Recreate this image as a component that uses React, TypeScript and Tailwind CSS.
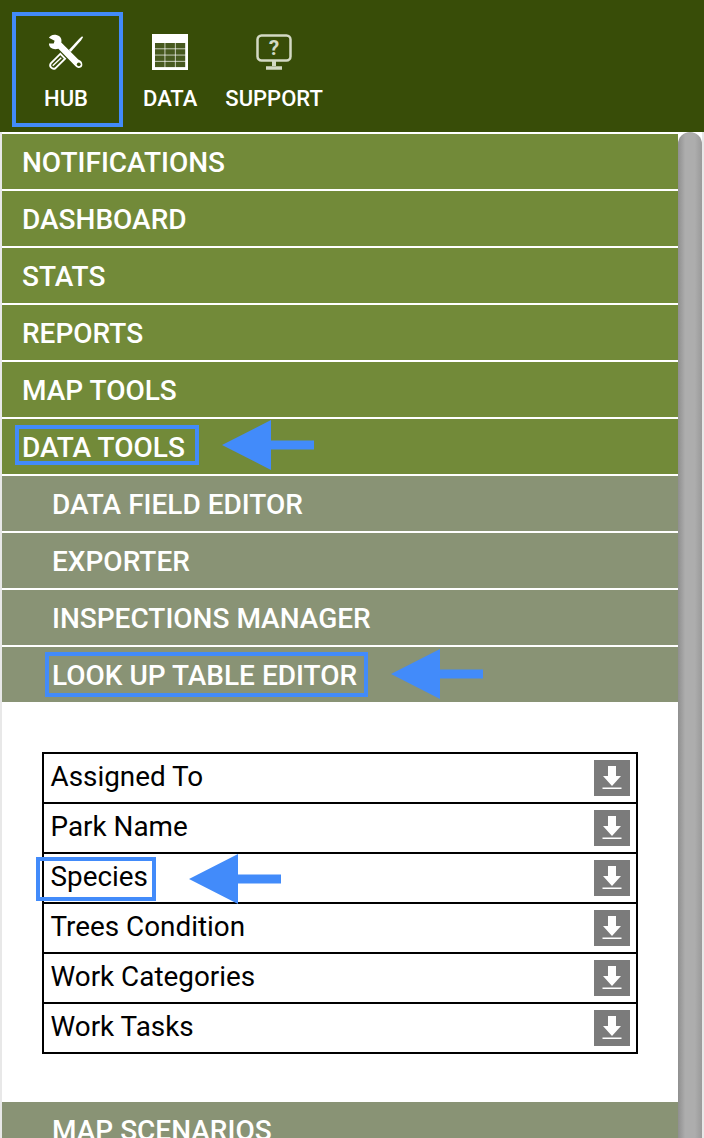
import { ReactNode } from "react";

// Blue annotation arrow pointing left
function Arrow({ className }: { className: string }) {
  return (
    <svg className={`absolute ${className}`} width="92" height="50" viewBox="0 0 92 50">
      <path d="M0 25 L49 0 V20.5 H92 V29.5 H49 V50 Z" fill="#428BFA" />
    </svg>
  );
}

function ToolsIcon() {
  return (
    <svg width="36" height="36" viewBox="0 0 38 38" fill="none">
      <path d="M22 17 L33 5 L36 2.5 L37 3.5 L35 6.5 L24 19 Z" fill="white" />
      <path d="M13 21 L3 31 A3.6 3.6 0 0 0 8 36 L18 26 Z" stroke="white" strokeWidth="2" fill="none" />
      <path d="M5 33.5 L14 25" stroke="white" strokeWidth="1.5" />
      <path
        d="M9 1 C5 0 2 2 1 4 L7 7 L6 10 L1 10 C1 15 6 17 11 15.5 L29 34 C32 37.5 37.5 36 36 31 C36 29 34 28 32 27 L14 9 C15 5 13 2 9 1 Z"
        fill="white"
      />
      <circle cx="32.5" cy="32" r="2" fill="#384D08" />
    </svg>
  );
}

function TableIcon() {
  const cols = [0, 1, 2];
  const rows = [0, 1, 2, 3];
  return (
    <svg width="36" height="36" viewBox="0 0 36 36">
      <rect width="36" height="36" fill="white" />
      {rows.map((r) =>
        cols.map((c) => (
          <rect key={`${r}-${c}`} x={3 + c * 10.3} y={9 + r * 6.2} width="9.6" height="5.5" fill="#47591f" />
        ))
      )}
    </svg>
  );
}

function SupportIcon() {
  return (
    <svg width="36" height="36" viewBox="0 0 36 36" fill="none">
      <rect x="1.5" y="1.5" width="33" height="25" rx="4" stroke="#d3d9c4" strokeWidth="2.5" />
      <path d="M18 27 V32" stroke="#d3d9c4" strokeWidth="4" />
      <path d="M10 34 H26" stroke="#d3d9c4" strokeWidth="3.5" />
      <text x="18" y="21" textAnchor="middle" fontSize="21" fontWeight="700" fill="#d3d9c4" fontFamily="Roboto, sans-serif">
        ?
      </text>
    </svg>
  );
}

function DownloadIcon() {
  return (
    <div className="flex h-9 w-9 items-center justify-center bg-[#7b7b7b]">
      <svg width="20" height="24" viewBox="0 0 20 24">
        <path d="M6 0 H14 V10 H19 L10 20 L1 10 H6 Z" fill="white" />
        <rect x="0.5" y="21.5" width="19" height="1.5" fill="white" />
      </svg>
    </div>
  );
}

function Tab({ icon, label }: { icon: ReactNode; label: string }) {
  return (
    <div className="flex flex-col items-center">
      <div className="flex h-9 items-center">{icon}</div>
      <span className="mt-[17px] text-[22px] leading-[24px] font-medium text-white">{label}</span>
    </div>
  );
}

function MenuRow({ label, sub, children }: { label: string; sub?: boolean; children?: ReactNode }) {
  return (
    <div
      className={`relative mb-[2px] flex h-[55px] items-center pt-[2px] text-[28px] leading-[53px] font-medium text-white ${
        sub ? "bg-[#899375] pl-[50px]" : "bg-[#728a39] pl-[20px]"
      }`}
    >
      {label}
      {children}
    </div>
  );
}

const lookups = ["Assigned To", "Park Name", "Species", "Trees Condition", "Work Categories", "Work Tasks"];

export default function App() {
  return (
    <div className="h-[1138px] w-[704px] overflow-hidden bg-white font-['Roboto',sans-serif]">
      {/* Top bar */}
      <div className="relative flex h-[132px] bg-[#384d08] pt-[34px] pl-[43px]">
        <div className="absolute top-3 left-3 h-[115px] w-[111px] border-4 border-[#428BFA]" />
        <div className="w-[46px]">
          <Tab icon={<ToolsIcon />} label="HUB" />
        </div>
        <div className="ml-[54px]">
          <Tab icon={<TableIcon />} label="DATA" />
        </div>
        <div className="ml-[28px]">
          <Tab icon={<SupportIcon />} label="SUPPORT" />
        </div>
      </div>

      <div className="flex h-[1006px]">
        <div className="w-[2px] bg-[#e8e8e8]" />
        <div className="w-[676px] pt-[2px]">
          <MenuRow label="NOTIFICATIONS" />
          <MenuRow label="DASHBOARD" />
          <MenuRow label="STATS" />
          <MenuRow label="REPORTS" />
          <MenuRow label="MAP TOOLS" />
          <MenuRow label="DATA TOOLS">
            <div className="absolute top-[6px] left-[13px] h-[40px] w-[184px] border-4 border-[#428BFA]" />
            <Arrow className="top-[1px] left-[220px]" />
          </MenuRow>
          <MenuRow label="DATA FIELD EDITOR" sub />
          <MenuRow label="EXPORTER" sub />
          <MenuRow label="INSPECTIONS MANAGER" sub />
          <div className="-mb-[2px]">
            <MenuRow label="LOOK UP TABLE EDITOR" sub>
              <div className="absolute top-[5px] left-[43px] h-[45px] w-[323px] border-4 border-[#428BFA]" />
              <Arrow className="top-[2px] left-[389px]" />
            </MenuRow>
          </div>

          {/* Lookup list */}
          <div className="h-[400px] pt-[50px] pl-[40px]">
            <div className="w-[596px] border-2 border-b-0 border-black">
              {lookups.map((name) => (
                <div
                  key={name}
                  className="relative flex h-[50px] items-center justify-between border-b-2 border-black pr-[6px] pl-[6.5px] text-[27.85px] text-black"
                >
                  <span className="relative -top-px">{name}</span>
                  <DownloadIcon />
                  {name === "Species" && (
                    <>
                      <div className="absolute top-[3px] left-[-8px] h-[44px] w-[120px] border-4 border-[#428BFA]" />
                      <Arrow className="top-[0px] left-[145px]" />
                    </>
                  )}
                </div>
              ))}
            </div>
          </div>
          <div className="h-[36px] overflow-hidden">
            <MenuRow label="MAP SCENARIOS" sub />
          </div>
        </div>

        {/* Scrollbar */}
        <div className="w-[24px] bg-white">
          <div className="h-full rounded-t-[12px] bg-[linear-gradient(to_right,#8f8f8f,#adadad_30%,#adadad_70%,#9a9a9a)]" />
        </div>
        <div className="w-[2px] bg-[#e8e8e8]" />
      </div>
    </div>
  );
}
